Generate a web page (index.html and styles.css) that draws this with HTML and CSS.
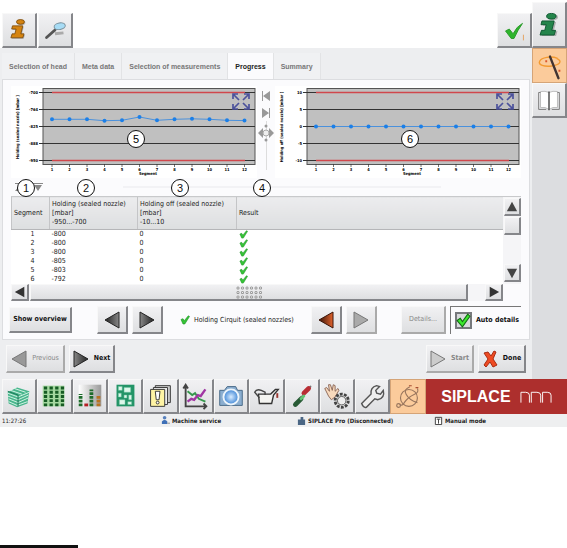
FILE: index.html
```html
<!DOCTYPE html>
<html lang="en">
<head>
    <meta charset="UTF-8">
    <title>SIPLACE - Progress</title>
    <link rel="stylesheet" href="styles.css">
</head>
<body>
    <!-- shared shapes -->
    <svg class="defs" aria-hidden="true">
        <defs>
            <linearGradient id="dark" x1="0" x2="1"><stop offset="0" stop-color="#222"/><stop offset="1" stop-color="#888"/></linearGradient>
            <linearGradient id="darkR" x1="0" x2="1"><stop offset="0" stop-color="#888"/><stop offset="1" stop-color="#222"/></linearGradient>
            <linearGradient id="rust" x1="0" x2="1"><stop offset="0" stop-color="#3a1408"/><stop offset="1" stop-color="#e0622c"/></linearGradient>
            <linearGradient id="bars" x1="0" x2="1"><stop offset="0" stop-color="#fff"/><stop offset="1" stop-color="#999"/></linearGradient>
            <radialGradient id="lens"><stop offset="0" stop-color="#d8ecff"/><stop offset="1" stop-color="#3f86d6"/></radialGradient>
            <symbol id="left" viewBox="0 0 16 18"><path d="M15 1v16L1 9z"/></symbol>
            <symbol id="right" viewBox="0 0 16 18"><path d="M1 1v16l14-8z"/></symbol>
            <symbol id="tick" viewBox="0 0 10 10"><path d="M1 4.500l2-.8 1.300 2L8.300 .8 9.500 1.500 4.800 9 3 9z" fill="#35c435" stroke="#1a8f24" stroke-width=".6"/></symbol>
            <symbol id="info" viewBox="0 0 24 26">
                <ellipse cx="15" cy="4" rx="5" ry="3"/>
                <path d="M5 9h13L15.500 19h4l-1.500 5H3l1.500-5H8l1.500-6H4z"/>
            </symbol>
            <symbol id="frame" viewBox="0 0 246 92">
                <rect width="246" height="92" fill="#fff"/>
                <rect x="32" y="2.500" width="212" height="76" fill="#c0c0c0" stroke="#555"/>
                <path d="M28 6.500h216M28 23.500h216M28 40.500h216M28 57.500h216M28 74.500h216" stroke="#333"/>
                <path d="M41 6.500h193M41 74.500h193" stroke="#d0474c" stroke-width="1.500"/>
                <path d="M41 78v3M58.500 78v3M76 78v3M93.500 78v3M111 78v3M128.500 78v3M146 78v3M163.500 78v3M181 78v3M198.500 78v3M216 78v3M233.500 78v3" stroke="#333" stroke-width=".7"/>
                <g stroke="#4c529c" stroke-width="1.700" fill="none">
                    <path d="M222 13V8h5M222 8l6 6M233 8h5v5M238 8l-6 6M222 18v5h5M222 23l6-6M233 23h5v-5M238 23l-6-6"/>
                </g>
                <g class="axis" text-anchor="middle">
                    <text x="41" y="85">1</text><text x="58.500" y="85">2</text><text x="76" y="85">3</text><text x="93.500" y="85">4</text>
                    <text x="111" y="85">5</text><text x="128.500" y="85">6</text><text x="146" y="85">7</text><text x="163.500" y="85">8</text>
                    <text x="181" y="85">9</text><text x="198.500" y="85">10</text><text x="216" y="85">11</text><text x="233.500" y="85">12</text>
                    <text x="137" y="89">Segment</text>
                </g>
            </symbol>
        </defs>
    </svg>

    <div class="app">
        <div class="upper">
            <main class="main">
                <header class="header">
                    <button class="btn tool" aria-label="Information"><svg viewBox="0 0 34 34"><use href="#info" x="6" y="6" width="22" height="22" fill="#666" opacity=".4"/><use href="#info" x="5" y="5" width="22" height="22" fill="#d58411" stroke="#754608"/></svg></button>
                    <button class="btn tool" aria-label="Search"><svg viewBox="0 0 34 34"><path d="M17 21l9-1" stroke="#aaa" stroke-width="3"/><path d="M8 25l9-8" stroke="#555" stroke-width="3" stroke-linecap="round"/><ellipse cx="22" cy="13" rx="6" ry="3.500" fill="#a7dcf5" stroke="#78909c" transform="rotate(-10 22 13)"/></svg></button>
                    <button class="btn tool confirm" aria-label="Confirm"><svg viewBox="0 0 34 34"><path d="M8 18l4-2 4 5q4-8 10-11-5 7-9 16h-3z" fill="#2fb52d" stroke="#2c9a2c"/><path d="M27 22v6" stroke="#e5a05c"/></svg></button>
                </header>

                <nav class="tabs">
                    <button class="tab">Selection of head</button>
                    <button class="tab">Meta data</button>
                    <button class="tab">Selection of measurements</button>
                    <button class="tab active">Progress</button>
                    <button class="tab">Summary</button>
                </nav>

                <section class="panel">
                    <div class="charts">
                        <svg class="chart" viewBox="0 0 246 92">
                            <use href="#frame"/>
                            <g class="axis" text-anchor="end">
                                <text x="27" y="7.500">-700</text><text x="27" y="25">-764</text><text x="27" y="42">-825</text><text x="27" y="59">-888</text><text x="27" y="76">-950</text>
                            </g>
                            <text class="axis" transform="translate(8 41) rotate(-90)" text-anchor="middle">Holding (sealed nozzle) [mbar ]</text>
                            <path d="M41 33.300H76L93.500 34.700 111 34.300 128.500 31 146 34.300 163.500 33.300 181 32.800 198.500 33.300 216 34.300 233.500 34.600" class="line"/>
                            <path d="M41 33.300h0M58.500 33.300h0M76 33.300h0M93.500 34.700h0M111 34.300h0M128.500 31h0M146 34.300h0M163.500 33.300h0M181 32.800h0M198.500 33.300h0M216 34.300h0M233.500 34.600h0" class="dots"/>
                            <circle cx="125" cy="53" r="8.500" class="ring"/><text x="125" y="57" class="ring-no">5</text>
                        </svg>
                        <div class="split">
                            <svg viewBox="0 0 18 92" fill="#999">
                                <path d="M5 5h1v10H5zM13 5v10l-7-5zM5 22v10l7-5zM12 22h1v10h-1zM6 42v10l-5-5zM12 42v10l5-5z"/>
                                <path d="M9.500 35v49" stroke="#ddd" fill="none"/>
                                <circle cx="9" cy="47" r="3" fill="#eee" stroke="#aaa"/><circle cx="9" cy="40" r="1.500"/><circle cx="9" cy="54" r="1.500"/>
                            </svg>
                        </div>
                        <svg class="chart" viewBox="0 0 246 92">
                            <use href="#frame"/>
                            <g class="axis" text-anchor="end">
                                <text x="27" y="7.500">10</text><text x="27" y="25">5</text><text x="27" y="42">0</text><text x="27" y="59">-5</text><text x="27" y="76">-10</text>
                            </g>
                            <text class="axis" transform="translate(8 41) rotate(-90)" text-anchor="middle">Holding off (sealed nozzle) [mbar ]</text>
                            <path d="M41 40.500h192.500" class="line"/>
                            <path d="M41 40.500h0M58.500 40.500h0M76 40.500h0M93.500 40.500h0M111 40.500h0M128.500 40.500h0M146 40.500h0M163.500 40.500h0M181 40.500h0M198.500 40.500h0M216 40.500h0M233.500 40.500h0" class="dots"/>
                            <circle cx="135" cy="53" r="8.500" class="ring"/><text x="135" y="57" class="ring-no">6</text>
                        </svg>
                    </div>

                    <div class="divider">
                        <svg viewBox="0 0 32 8" fill="#888"><path d="M4 0h10v1H4zM9 2l4 6H4zM22 0h10v1H22zM23 2h8l-4 6z"/></svg>
                        <hr>
                        <span class="mark mark1">1</span>
                        <span class="mark mark2">2</span>
                        <span class="mark mark3">3</span>
                        <span class="mark mark4">4</span>
                    </div>

                    <div class="grid">
                        <table class="results">
                            <thead>
                                <tr>
                                    <th class="c1">Segment</th>
                                    <th class="c2">Holding (sealed nozzle)<br>[mbar]<br>-950...-700</th>
                                    <th class="c3">Holding off (sealed nozzle)<br>[mbar]<br>-10...10</th>
                                    <th>Result</th>
                                </tr>
                            </thead>
                            <tbody>
                                <tr><td>1</td><td>-800</td><td>0</td><td><svg><use href="#tick"/></svg></td></tr>
                                <tr><td>2</td><td>-800</td><td>0</td><td><svg><use href="#tick"/></svg></td></tr>
                                <tr><td>3</td><td>-800</td><td>0</td><td><svg><use href="#tick"/></svg></td></tr>
                                <tr><td>4</td><td>-805</td><td>0</td><td><svg><use href="#tick"/></svg></td></tr>
                                <tr><td>5</td><td>-803</td><td>0</td><td><svg><use href="#tick"/></svg></td></tr>
                                <tr><td>6</td><td>-792</td><td>0</td><td><svg><use href="#tick"/></svg></td></tr>
                            </tbody>
                        </table>
                        <div class="vscroll">
                            <button class="btn" aria-label="Scroll up"><svg viewBox="0 0 14 14"><path d="M7 1l6 11H1z" fill="#444"/></svg></button>
                            <div class="btn thumb"></div>
                            <button class="btn down" aria-label="Scroll down"><svg viewBox="0 0 14 14"><path d="M7 13L1 2h12z" fill="#444"/></svg></button>
                        </div>
                        <div class="hscroll">
                            <button class="btn" aria-label="Scroll left"><svg viewBox="0 0 14 14"><path d="M1 7l11-6v12z" fill="#333"/></svg></button>
                            <div class="btn thumb"><svg class="grip" viewBox="0 0 26 13"><path d="M2 2h25M2 6.500h25M2 11h25" stroke="#888" stroke-width="3" stroke-linecap="round" stroke-dasharray="0 4.500"/><path d="M2 2h25M2 6.500h25M2 11h25" stroke="#eee" stroke-width="1.500" stroke-linecap="round" stroke-dasharray="0 4.500"/></svg></div>
                            <button class="btn" aria-label="Scroll right"><svg viewBox="0 0 14 14"><path d="M13 7L2 1v12z" fill="#333"/></svg></button>
                        </div>
                    </div>

                    <div class="actions">
                        <button class="btn overview">Show overview</button>
                        <button class="btn arrow" aria-label="Previous step"><svg fill="url(#dark)" stroke="#222"><use href="#left"/></svg></button>
                        <button class="btn arrow" aria-label="Next step"><svg fill="url(#darkR)" stroke="#222"><use href="#right"/></svg></button>
                        <span class="circuit"><svg><use href="#tick"/></svg>Holding Cirquit (sealed nozzles)</span>
                        <button class="btn arrow" aria-label="Previous error"><svg fill="url(#rust)" stroke="#3a1408"><use href="#left"/></svg></button>
                        <button class="btn arrow" aria-label="Next error" disabled><svg fill="#aaa" stroke="#777"><use href="#right"/></svg></button>
                        <button class="btn details" disabled>Details...</button>
                        <label class="auto"><span class="box"><input type="checkbox" checked><svg viewBox="0 0 14 14"><path d="M1 7l3-2 2 3 5-7 2 2-7 10z" fill="#3bea2c" stroke="#146b16"/></svg></span>Auto details</label>
                    </div>
                </section>

                <div class="steps">
                    <button class="btn prev" disabled><svg fill="#999" stroke="#777"><use href="#left"/></svg>Previous</button>
                    <button class="btn next"><svg fill="url(#darkR)" stroke="#222"><use href="#right"/></svg>Next</button>
                    <button class="btn start" disabled><svg fill="#ccc" stroke="#777"><use href="#right"/></svg>Start</button>
                    <button class="btn done"><svg viewBox="0 0 16 18"><path d="M2 3l4-1 3 4 3-5 2 1-3 7 4 6-4 2-3-5-4 5-2-2 4-6z" fill="#ee4b22" stroke="#a92c12"/></svg>Done</button>
                </div>
            </main>

            <aside class="side">
                <button class="btn help" aria-label="Help"><svg viewBox="0 0 34 44"><use href="#info" x="6" y="10" width="25" height="26" fill="#777" opacity=".5"/><use href="#info" x="4" y="9" width="25" height="26" fill="#24854b" stroke="#0e5630"/></svg></button>
                <button class="btn tool on" aria-label="Wizard"><svg viewBox="0 0 34 34" fill="none"><path d="M24 9C31 12 27 16 19 17S4 16 6 12s12-6 19-3" stroke="#f39a31" stroke-width="1.500"/><path d="M17 7l9 23" stroke="#423432" stroke-width="2.500" stroke-linecap="round"/><path d="M12 12h2M26 22h2" stroke="#dc562b" stroke-width="2"/></svg></button>
                <button class="btn tool" aria-label="Manual"><svg viewBox="0 0 34 34"><path d="M8 8q5-1 9 1 4-2 9-1v17q-5-1-9 2-4-3-9-2z" fill="#fff" stroke="#bbb"/><path d="M17 8v20" stroke="#444" stroke-width="1.500"/><path d="M8 9H6v18h8M26 9h2v18h-8" fill="none" stroke="#777"/></svg></button>
            </aside>
        </div>

        <nav class="toolbar">
            <button class="btn tool" aria-label="Boards"><svg viewBox="0 0 34 34"><path d="M5 13l10-5 13 4-2 13-11 4-9-4z" fill="#48b58c"/><path d="M5 14l11 4 12-5M5 17l11 4 11-5M6 20l10 4 11-5M6 23l9 4 11-4M8 11l12 4M12 9l12 4" fill="none" stroke="#d9f5e8"/><path d="M5 12l11 4v12" fill="none" stroke="#187353"/></svg></button>
            <button class="btn tool" aria-label="Feeders"><svg viewBox="0 0 34 34"><path d="M5 6h23v22H5z" fill="#a5d8a0"/><path d="M8 7v21M14 7v21M20 7v21M26 7v21" stroke="#175c24" stroke-width="3.500" stroke-dasharray="3 1.500"/></svg></button>
            <button class="btn tool" aria-label="Levels"><svg viewBox="0 0 34 34"><path d="M5 5h24v23H5z" fill="url(#bars)"/><path d="M7 28V15M18.500 28V10" stroke="#1d6b2b" stroke-width="4" stroke-dasharray="3 1"/><path d="M11 26.500h4" stroke="#b51f25" stroke-width="3"/><path d="M26 28V16" stroke="#b97320" stroke-width="4" stroke-dasharray="3 1"/></svg></button>
            <button class="btn tool" aria-label="Board layout"><svg viewBox="0 0 34 34"><path d="M8 5h19v23H8z" fill="#239467"/><path d="M10 7h4v4h-4zM16 8h7v5h-7zM10 14h3v4h-3zM16 16h3v3h-3zM21 16h3v5h-3zM11 21h6v5h-6zM20 23h4v3h-4z" fill="#ddf7ea" stroke="#71c4a2" stroke-width=".5"/></svg></button>
            <button class="btn tool" aria-label="Messages"><svg viewBox="0 0 34 34" stroke="#333"><path d="M12 6h16v18H12z" fill="#ccc"/><path d="M10 8h15v18H10z" fill="#eee"/><path d="M7 10h15v18H7z" fill="#fff4a4"/><path d="M12 12h5l-1 9h-3z" fill="#fff"/><circle cx="14.500" cy="24" r="1.500" fill="#fff"/></svg></button>
            <button class="btn tool" aria-label="Statistics"><svg viewBox="0 0 34 34" fill="none"><path d="M6 6v22h21M3.500 9L6 5l2.500 4M25 25l3 3-3 3" stroke="#444" stroke-width="2"/><path d="M8 12l5 4 3-2 4 6 7 3" stroke="#36984c" stroke-width="2"/><path d="M8 23l4-3 3 1 4-5 3 1 5-7" stroke="#a136a3" stroke-width="2.500"/></svg></button>
            <button class="btn tool" aria-label="Camera"><svg viewBox="0 0 34 34"><path d="M5 11h5l3-4h9l2 4h5v16H5z" fill="#8baed0" stroke="#466785"/><circle cx="17" cy="18" r="8" fill="url(#lens)" stroke="#edf5fb" stroke-width="2"/></svg></button>
            <button class="btn tool" aria-label="Lubrication"><svg viewBox="0 0 34 34"><path d="M9 15h13l5-5h3l-5 6-2 9H10z" fill="#f4f4f1" stroke="#333" stroke-width="1.500"/><path d="M10 19l-5-6q2-4 7-2l4 2v3" fill="none" stroke="#444" stroke-width="1.500"/><path d="M29 14v5" stroke="#9b352d" stroke-width="2"/></svg></button>
            <button class="btn tool" aria-label="Connections"><svg viewBox="0 0 34 34" stroke-linecap="round"><path d="M9 27L26 7" stroke="#777" stroke-width="2"/><path d="M10 26l6-6" stroke="#285a35" stroke-width="5"/><path d="M19 14l5-5" stroke="#b92e35" stroke-width="5"/><path d="M16 20l3-3" stroke="#62c573" stroke-width="3"/></svg></button>
            <button class="btn tool" aria-label="Manual service"><svg viewBox="0 0 34 34"><path d="M8 17L4 9l2-1 3 4-1-7h2l2 6 1-6 2 1v6l3-3 1 2-4 7-4 3z" fill="#f8d9bc" stroke="#8b6658"/><circle cx="22" cy="22" r="7" fill="#ddd" stroke="#444" stroke-width="3" stroke-dasharray="3 1.400"/><circle cx="22" cy="22" r="4.500" fill="#eee" stroke="#555"/></svg></button>
            <button class="btn tool" aria-label="Setup"><svg viewBox="0 0 34 34"><path d="M6 25l10-10q-1-7 6-9l3 1-4 4 1 3 4 1 3-4q2 8-6 10l-3-1-9 9q-3 1-5-4z" fill="#eee" stroke="#555" stroke-width="1.500"/></svg></button>
            <button class="btn tool on" aria-label="Diagnostics"><svg viewBox="0 0 34 34" fill="none" stroke="#98755d" stroke-width="1.200"><circle cx="18" cy="18" r="9"/><path d="M19 6q-7 3-4 8 3 6 12 9M27 8q2 4-3 6-7 3-11 9-2 4-5 2"/><path d="M18 5h3M25 7h3" stroke="#a84e32"/><circle cx="7" cy="26" r="2"/></svg></button>
            <div class="brand">SIPLACE<svg viewBox="0 0 34 12" fill="none" stroke="#fff"><path d="M1 12V1h5q4 0 4 3v8M12 12V1h6q4 0 4 3v8M24 12V1h5q4 0 4 3v8"/></svg></div>
        </nav>

        <footer class="status">
            <span class="time">11:27:26</span>
            <span><svg viewBox="0 0 10 10"><circle cx="4" cy="2" r="2" fill="#5680bd"/><path d="M1 9V6q3-3 6 0v3z" fill="#3e70b7"/><path d="M7 8h3" stroke="#888"/></svg>Machine service</span>
            <span><svg viewBox="0 0 10 10"><path d="M1 4h3v6H1zM4 1h3v9H4zM7 4h2v6H7z" fill="#4a6684"/></svg>SIPLACE Pro (Disconnected)</span>
            <span><svg viewBox="0 0 10 10" fill="#fff" stroke="#333"><path d="M1.500 1.500h7v8h-7zM3 3.500h4M5 3.500v5"/></svg>Manual mode</span>
        </footer>
    </div>
    <div class="rule"></div>
</body>
</html>
```
FILE: styles.css
```css
* {
    box-sizing: border-box;
}
body {
    margin: 0;
    min-height: 100vh;
    display: flex;
    flex-direction: column;
    justify-content: space-between;
    background: #fff;
    color: #222;
    font: 7px/9px "DejaVu Sans Condensed", "DejaVu Sans", sans-serif;
}
svg {
    display: block;
    flex: none;
}
.defs {
    position: absolute;
    width: 0;
    height: 0;
}
.btn {
    display: flex;
    align-items: center;
    justify-content: center;
    margin: 0;
    padding: 0;
    border: 1px solid #f8f8f8;
    border-right: 2px solid #85868a;
    border-bottom: 2px solid #85868a;
    background: linear-gradient(#f1f1f3, #dedfe1);
    color: #111;
    font: inherit;
    font-weight: bold;
}
.btn:disabled {
    color: #888;
    border-right-color: #aaa;
    border-bottom-color: #aaa;
}
.tool {
    width: 35px;
    height: 35px;
}
.tool svg {
    width: 32px;
    height: 32px;
}
.on {
    background: #fbcb9b;
    border: 1px solid #d5a477;
}
.upper {
    display: flex;
}
.main {
    flex: 1;
    min-width: 0;
    background: #edeef0;
}
.header {
    display: flex;
    gap: 1px;
    padding: 13px 0 0 2px;
    background: #fff;
}
.confirm {
    margin-left: auto;
}

/* tabs */
.tabs {
    display: flex;
    padding: 5px 2px 0;
}
.tab {
    height: 26px;
    padding: 0 7px;
    border: 0;
    border-right: 1px solid #e2e3e5;
    background: #f0f1f3;
    color: #777;
    font: bold 7px/9px "Liberation Sans", Arial, sans-serif;
}
.tab.active {
    background: #fbfbfd;
    color: #222;
}
.panel {
    margin: 0 2px;
    padding: 6px 8px 5px;
    border: 1px solid #dcdde0;
    background: #fbfbfd;
}

/* charts */
.charts {
    display: grid;
    grid-template-columns: 1fr 18px 1fr;
}
.chart {
    width: 100%;
}
.axis {
    font-size: 4px;
    font-weight: bold;
}
.line {
    fill: none;
    stroke: #4b91dc;
}
.dots {
    stroke: #1b7fe8;
    stroke-width: 4;
    stroke-linecap: round;
}
.ring {
    fill: #fff;
    stroke: #111;
}
.ring-no {
    font: 11px "Liberation Sans", Arial, sans-serif;
    text-anchor: middle;
}
.divider {
    position: relative;
    display: flex;
    align-items: center;
    height: 18px;
}
.divider svg {
    width: 32px;
}
.divider hr {
    flex: 1;
    margin: 0 80px;
    border: 0;
    border-top: 2px solid #f2f2f5;
}
.mark {
    position: absolute;
    top: 1px;
    width: 18px;
    height: 18px;
    border: 1px solid #111;
    border-radius: 50%;
    background: #fff;
    color: #111;
    font: 11px/16px "Liberation Sans", Arial, sans-serif;
    text-align: center;
}
.mark1 { left: 6px; }
.mark2 { left: 66px; }
.mark3 { left: 160px; }
.mark4 { left: 242px; }

/* results table */
.grid {
    display: grid;
    grid-template-columns: 1fr 18px;
}
.results {
    width: 100%;
    table-layout: fixed;
    border-collapse: collapse;
    background: #fff;
}
.results th {
    height: 33px;
    padding: 0 2px;
    border-top: 1px solid #c8c9cb;
    border-bottom: 1px solid #b5b6b8;
    border-left: 1px solid #c4c5c7;
    background: linear-gradient(#ececee, #dddfe0);
    font-weight: normal;
    text-align: left;
}
.results .c1 { width: 38px; }
.results .c2 { width: 88px; }
.results .c3 { width: 99px; }
.results td {
    height: 9px;
    padding: 0 2px;
}
.results td:first-child {
    padding-right: 15px;
    text-align: right;
}
.results td svg {
    width: 9px;
    height: 9px;
}
.vscroll {
    display: flex;
    flex-direction: column;
    gap: 1px;
    padding: 1px 0 2px 1px;
    background: #f5f5f7;
    border-top: 1px solid #c8c9cb;
}
.vscroll .btn {
    height: 18px;
}
.vscroll .down {
    margin-top: auto;
}
.vscroll svg,
.hscroll svg {
    width: 12px;
    height: 12px;
}
.hscroll {
    display: flex;
    gap: 1px;
    height: 17px;
    background: #f5f5f7;
}
.hscroll button {
    width: 18px;
}
.hscroll .thumb {
    flex: 1;
    margin-right: 16px;
}
.hscroll .grip {
    width: 26px;
    height: 13px;
}

/* buttons below the table */
.actions {
    display: flex;
    align-items: center;
    margin-top: 5px;
}
.actions .btn {
    height: 28px;
}
.actions .overview {
    width: 63px;
    height: 26px;
    margin: 0 25px 0 -2px;
}
.actions .arrow {
    width: 31px;
    margin-right: 4px;
}
.arrow svg,
.steps svg {
    width: 16px;
    height: 18px;
}
.circuit {
    display: flex;
    align-items: center;
    gap: 4px;
    flex: 1;
    padding-left: 13px;
    white-space: nowrap;
}
.circuit svg {
    width: 10px;
    height: 10px;
}
.actions .details {
    width: 45px;
    margin: 0 4px 0 20px;
    font-weight: normal;
}
.auto {
    display: flex;
    align-items: center;
    gap: 4px;
    width: 71px;
    height: 28px;
    padding-left: 4px;
    border-top: 1px solid #777;
    border-left: 1px solid #777;
    color: #111;
    font-weight: bold;
    white-space: nowrap;
}
.box {
    position: relative;
    width: 17px;
    height: 17px;
}
.box input {
    appearance: none;
    width: 17px;
    height: 17px;
    margin: 0;
    border: 2px solid #77797c;
    background: #d8d9dc;
}
.box svg {
    position: absolute;
    inset: 1px;
}
.steps {
    display: flex;
    gap: 4px;
    padding: 5px 6px 6px;
}
.steps .btn {
    gap: 5px;
    height: 28px;
    padding: 0 4px;
}
.steps .prev {
    width: 59px;
    font-weight: normal;
}
.steps .next {
    width: 46px;
}
.steps .start {
    width: 48px;
    margin-left: auto;
}
.steps .done {
    width: 48px;
}
.side {
    width: 35px;
    padding-top: 2px;
    background: linear-gradient(#fff 48px, #dcdde0 48px);
}
.side .help {
    width: 35px;
    height: 46px;
}
.side .help svg {
    width: 32px;
}

/* bottom bar */
.toolbar {
    display: grid;
    grid-template-columns: repeat(12, 3fr) 12fr;
    padding: 0 0 0 2px;
    background: #edeef0;
}
.toolbar .tool {
    width: auto;
}
.brand {
    display: flex;
    align-items: center;
    justify-content: center;
    gap: 9px;
    background: #ad2f2d;
    color: #fff;
    font: bold 16px/35px "Liberation Sans", Arial, sans-serif;
}
.brand svg {
    width: 32px;
    height: 12px;
}
.status {
    display: grid;
    grid-template-columns: 161fr 136fr 137fr 133fr;
    height: 13px;
    background: #eeeff0;
    font-size: 6px;
    font-weight: bold;
}
.status span {
    display: flex;
    align-items: center;
    gap: 2px;
    white-space: nowrap;
}
.status svg {
    width: 9px;
    height: 9px;
}
.status .time {
    padding-left: 2px;
    font-weight: normal;
}
.rule {
    width: 78px;
    height: 3px;
    background: #111;
}
```
